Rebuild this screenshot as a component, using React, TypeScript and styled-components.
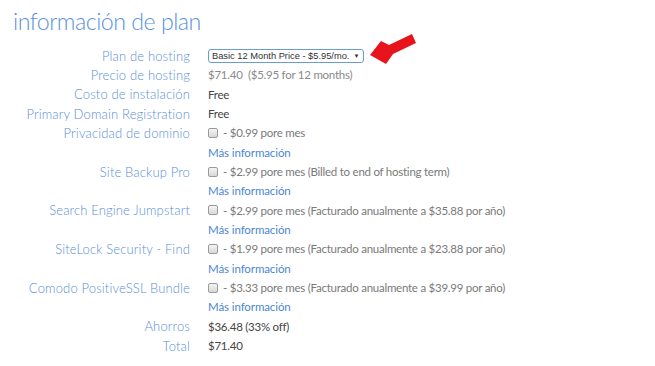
import React from "react";
import styled, { createGlobalStyle } from "styled-components";

const Global = createGlobalStyle`
  html, body { margin: 0; padding: 0; background: #fff; }
  body { font-family: "Lato", "Open Sans", sans-serif; }
`;

const Page = styled.div`
  width: 655px;
  height: 366px;
  box-sizing: border-box;
  padding: 4px 0 0 13px;
  overflow: hidden;
`;

const Title = styled.h1`
  margin: 0;
  font-family: "Lato", sans-serif;
  font-weight: 300;
  font-size: 23.2px;
  letter-spacing: -0.5px;
  line-height: 34px;
  color: #5a92dc;
`;

const Form = styled.div`
  display: grid;
  grid-template-columns: 177px auto;
  column-gap: 18px;
  grid-auto-rows: 19.33px;
  margin-top: 8px;
  align-items: center;
`;

const Label = styled.div`
  text-align: right;
  font-size: 13px;
  font-weight: 300;
  color: #5b8fd8;
  white-space: nowrap;
  letter-spacing: 0.15px;
`;

const Value = styled.div<{ $tone?: "dark" | "light" | "mid" }>`
  position: relative;
  display: flex;
  align-items: center;
  font-size: 11.5px;
  letter-spacing: -0.25px;
  white-space: nowrap;
  color: ${(p) => (p.$tone === "dark" ? "#444" : p.$tone === "light" ? "#8a8a8a" : "#7a7a7a")};
`;

const Select = styled.div`
  display: inline-flex;
  align-items: center;
  box-sizing: border-box;
  height: 14px;
  padding: 0 4px 0 3px;
  border: 1px solid #6b9ad6;
  border-radius: 3px;
  font-family: "Liberation Sans", Arial, sans-serif;
  font-size: 9.3px;
  letter-spacing: 0;
  color: #333;
  background: #fff;
  gap: 4px;
`;

const Caret = styled.span`
  font-size: 6px;
  color: #333;
`;

const Arrow = styled.svg`
  position: absolute;
  left: 158px;
  top: -18px;
`;

const Check = styled.span`
  display: inline-block;
  box-sizing: border-box;
  width: 10px;
  height: 10px;
  border: 1px solid #9a9a9a;
  border-radius: 2px;
  background: linear-gradient(#f4f4f4, #d8d8d8);
  margin-right: 5px;
`;

const More = styled.a`
  font-size: 11.5px;
  letter-spacing: -0.1px;
  color: #4d86d6;
  text-decoration: none;
  cursor: pointer;
`;

type Addon = { label: string; price: string; note?: string };

const addons: Addon[] = [
  { label: "Privacidad de dominio", price: "$0.99" },
  { label: "Site Backup Pro", price: "$2.99", note: "(Billed to end of hosting term)" },
  { label: "Search Engine Jumpstart", price: "$2.99", note: "(Facturado anualmente a $35.88 por año)" },
  { label: "SiteLock Security - Find", price: "$1.99", note: "(Facturado anualmente a $23.88 por año)" },
  { label: "Comodo PositiveSSL Bundle", price: "$3.33", note: "(Facturado anualmente a $39.99 por año)" },
];

export default function App() {
  return (
    <Page>
      <Global />
      <Title>información de plan</Title>
      <Form>
        <Label>Plan de hosting</Label>
        <Value>
          <Select>
            Basic 12 Month Price - $5.95/mo.
            <Caret>▼</Caret>
          </Select>
          <Arrow width="54" height="36" viewBox="0 0 54 36">
            <polygon points="4,24 15,10 23,14 46,3 50,12 27,23 20,33" fill="#e8141b" />
          </Arrow>
        </Value>

        <Label>Precio de hosting</Label>
        <Value $tone="light">$71.40&nbsp;&nbsp;($5.95 for 12 months)</Value>

        <Label>Costo de instalación</Label>
        <Value $tone="dark">Free</Value>

        <Label>Primary Domain Registration</Label>
        <Value $tone="dark">Free</Value>

        {addons.map((a) => (
          <React.Fragment key={a.label}>
            <Label>{a.label}</Label>
            <Value>
              <Check />- {a.price} pore mes{a.note ? <>&nbsp;{a.note}</> : null}
            </Value>
            <div />
            <Value>
              <More>Más información</More>
            </Value>
          </React.Fragment>
        ))}

        <Label>Ahorros</Label>
        <Value $tone="dark">$36.48 (33% off)</Value>

        <Label>Total</Label>
        <Value $tone="dark">$71.40</Value>
      </Form>
    </Page>
  );
}
